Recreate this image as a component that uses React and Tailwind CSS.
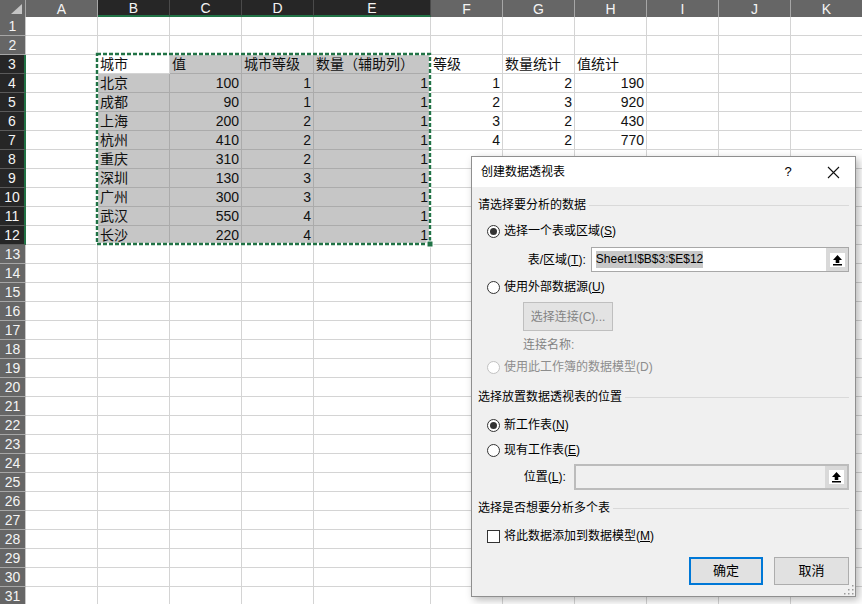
import React from "react";

const COLS = ["A", "B", "C", "D", "E", "F", "G", "H", "I", "J", "K"];

// data by row number, columns B..H
const DATA = {
  3: ["城市", "值", "城市等级", "数量（辅助列）", "等级", "数量统计", "值统计"],
  4: ["北京", 100, 1, 1, 1, 2, 190],
  5: ["成都", 90, 1, 1, 2, 3, 920],
  6: ["上海", 200, 2, 1, 3, 2, 430],
  7: ["杭州", 410, 2, 1, 4, 2, 770],
  8: ["重庆", 310, 2, 1],
  9: ["深圳", 130, 3, 1],
  10: ["广州", 300, 3, 1],
  11: ["武汉", 550, 4, 1],
  12: ["长沙", 220, 4, 1],
};

const isSelRow = (r) => r >= 3 && r <= 12;
const isSelCol = (c) => c >= 1 && c <= 4;

function ColHeader({ label, idx }) {
  const sel = isSelCol(idx);
  return (
    <div
      className={
        sel
          ? "h-[17px] bg-[#262626] border-r border-r-[#4a4a4a] border-b-2 border-b-[#217346] flex items-center justify-center text-[14px] leading-none text-[#f4f4f4]"
          : "h-[17px] bg-[#666666] border-r border-r-[#a6a6a6] flex items-center justify-center text-[14px] leading-none text-[#f4f4f4]"
      }
    >
      {label}
    </div>
  );
}

function RowHeader({ r }) {
  return (
    <div
      className={
        isSelRow(r)
          ? "h-[19px] bg-[#262626] border-b border-b-[#5a5a5a] border-r-2 border-r-[#217346] flex items-center justify-center text-[14px] leading-none text-[#f4f4f4]"
          : "h-[19px] bg-[#666666] border-b border-b-[#a6a6a6] border-r border-r-[#c8c8c8] flex items-center justify-center text-[14px] leading-none text-[#f4f4f4]"
      }
    >
      {r}
    </div>
  );
}

function Cell({ r, c }) {
  const row = DATA[r];
  const v = row && c >= 1 ? row[c - 1] : undefined;
  const sel = isSelRow(r) && isSelCol(c) && !(r === 3 && c === 1);
  const num = typeof v === "number";
  let cls = "h-[19px] border-r border-b border-[#d4d4d4] bg-white";
  if (sel) cls = "h-[19px] border-r border-b border-[#ababab] bg-[#c6c6c6]";
  return (
    <div className={cls}>
      {v !== undefined && (
        <div
          className={
            num
              ? "h-full flex items-end justify-end pr-[2px] text-[14px] leading-[17px] text-[#111] whitespace-nowrap"
              : "h-full flex items-end pl-[2px] text-[14px] leading-[17px] text-[#111] whitespace-nowrap"
          }
        >
          {v}
        </div>
      )}
    </div>
  );
}

function Radio({ checked, disabled }) {
  return (
    <span
      className={
        disabled
          ? "w-[13px] h-[13px] rounded-full border border-[#c2c2c2] bg-white flex items-center justify-center shrink-0"
          : "w-[13px] h-[13px] rounded-full border border-[#333] bg-white flex items-center justify-center shrink-0"
      }
    >
      {checked && <span className="w-[7px] h-[7px] rounded-full bg-[#333]" />}
    </span>
  );
}

function SectionTitle({ children, mt }) {
  return (
    <div className={`h-[20px] flex items-center gap-[3px] ${mt}`}>
      <span className="whitespace-nowrap">{children}</span>
      <span className="flex-1 h-px bg-[#d9d9d9]" />
    </div>
  );
}

function UploadBtn() {
  return (
    <div className="w-[22px] h-full bg-[#d9d9d9] flex items-center justify-center">
      <div className="w-[15px] h-[14px] bg-white flex items-center justify-center">
        <svg width="11" height="12" viewBox="0 0 11 12">
          <path d="M5.5 1 L10 6 H7.3 V9 H3.7 V6 H1 Z" fill="#000" />
          <rect x="1" y="10" width="9" height="1.5" fill="#000" />
        </svg>
      </div>
    </div>
  );
}

function Dialog() {
  return (
    <div className="absolute left-[471px] top-[156px] w-[385px] h-[441px] border border-[#8f8f8f] bg-[#f0f0f0] shadow-[3px_3px_8px_rgba(0,0,0,0.28)] flex flex-col text-[12px] text-black">
      <div className="h-[30px] bg-white flex items-center shrink-0">
        <span className="pl-[9px] flex-1">创建数据透视表</span>
        <span className="w-[46px] text-center text-[13px]">?</span>
        <span className="w-[44px] flex items-center justify-center">
          <svg width="13" height="13" viewBox="0 0 13 13">
            <path d="M1 1 L12 12 M12 1 L1 12" stroke="#111" strokeWidth="1.1" />
          </svg>
        </span>
      </div>
      <div className="flex flex-col px-[6px]">
        <SectionTitle mt="mt-[8px]">请选择要分析的数据</SectionTitle>
        <div className="h-[20px] mt-[6px] pl-[9px] flex items-center gap-[4px]">
          <Radio checked />
          <span>
            选择一个表或区域(<span className="underline">S</span>)
          </span>
        </div>
        <div className="h-[25px] mt-[6px] flex items-center">
          <span className="ml-[45px] w-[68px] pr-[5px] text-right whitespace-nowrap">
            表/区域(<span className="underline">T</span>):
          </span>
          <div className="w-[259px] h-full border border-[#a8a8a8] bg-white flex">
            <div className="flex-1 flex items-center pl-[4px]">
              <span className="bg-[#c8c8c8] text-[12px] leading-[17px]">Sheet1!$B$3:$E$12</span>
            </div>
            <UploadBtn />
          </div>
        </div>
        <div className="h-[20px] mt-[5px] pl-[9px] flex items-center gap-[4px]">
          <Radio />
          <span>
            使用外部数据源(<span className="underline">U</span>)
          </span>
        </div>
        <div className="h-[29px] mt-[5px] ml-[45px] w-[90px] border border-[#bfbfbf] bg-[#e3e3e3] text-[#838383] flex items-center justify-center">
          选择连接(C)...
        </div>
        <div className="h-[20px] mt-[4px] ml-[45px] flex items-center text-[#838383]">连接名称:</div>
        <div className="h-[20px] mt-[2px] pl-[9px] flex items-center gap-[4px] text-[#8d8d8d]">
          <Radio disabled />
          <span>使用此工作簿的数据模型(D)</span>
        </div>
        <SectionTitle mt="mt-[10px]">选择放置数据透视表的位置</SectionTitle>
        <div className="h-[20px] mt-[8px] pl-[9px] flex items-center gap-[4px]">
          <Radio checked />
          <span>
            新工作表(<span className="underline">N</span>)
          </span>
        </div>
        <div className="h-[20px] mt-[5px] pl-[9px] flex items-center gap-[4px]">
          <Radio />
          <span>
            现有工作表(<span className="underline">E</span>)
          </span>
        </div>
        <div className="h-[26px] mt-[4px] flex items-center">
          <span className="ml-[45px] w-[51px] pr-[8px] text-right whitespace-nowrap">
            位置(<span className="underline">L</span>):
          </span>
          <div className="w-[276px] h-full border-2 border-[#bcbcbc] bg-[#f0f0f0] flex">
            <div className="flex-1" />
            <UploadBtn />
          </div>
        </div>
        <SectionTitle mt="mt-[8px]">选择是否想要分析多个表</SectionTitle>
        <div className="h-[20px] mt-[8px] pl-[9px] flex items-center gap-[4px]">
          <span className="w-[13px] h-[13px] border border-[#333] bg-white shrink-0" />
          <span>
            将此数据添加到数据模型(<span className="underline">M</span>)
          </span>
        </div>
        <div className="h-[28px] mt-[11px] flex justify-end gap-[11px] text-[13px]">
          <div className="w-[74px] h-full border-2 border-[#0078d7] bg-[#e1e1e1] flex items-center justify-center">确定</div>
          <div className="w-[75px] h-full border border-[#adadad] bg-[#e1e1e1] flex items-center justify-center">取消</div>
        </div>
      </div>
      <svg className="absolute right-[1px] bottom-[1px]" width="11" height="11" viewBox="0 0 11 11">
        {[
          [9, 1], [9, 5], [5, 5], [9, 9], [5, 9], [1, 9],
        ].map(([x, y]) => (
          <rect key={`${x}-${y}`} x={x} y={y} width="1.5" height="1.5" fill="#9a9a9a" />
        ))}
      </svg>
    </div>
  );
}

export default function App() {
  const rows = Array.from({ length: 31 }, (_, i) => i + 1);
  return (
    <div className="relative w-[862px] h-[604px] overflow-hidden bg-white font-['Liberation_Sans','Noto_Sans_CJK_SC',sans-serif]">
      <div className="grid grid-cols-[26px_72px_72px_72px_72px_117px_72px_72px_72px_72px_72px_72px]">
        <div className="h-[17px] bg-[#666666] border-r border-r-[#a6a6a6] relative">
          <svg className="absolute left-[11px] top-[4px]" width="11" height="10" viewBox="0 0 11 10">
            <path d="M11 0 V10 H0 Z" fill="#c4c4c4" />
          </svg>
        </div>
        {COLS.map((c, i) => (
          <ColHeader key={c} label={c} idx={i} />
        ))}
        {rows.map((r) => (
          <React.Fragment key={r}>
            <RowHeader r={r} />
            {COLS.map((c, i) => (
              <Cell key={c} r={r} c={i} />
            ))}
          </React.Fragment>
        ))}
      </div>

      {/* marching ants round B3:E12 */}
      <svg className="absolute left-[94px] top-[51px]" width="342" height="198" viewBox="0 0 342 198">
        <rect x="3" y="3" width="333" height="190" fill="none" stroke="#fff" strokeWidth="2.4" />
        <rect x="3" y="3" width="333" height="190" fill="none" stroke="#217346" strokeWidth="2.4" strokeDasharray="4 2" />
        <rect x="333" y="190" width="6" height="6" fill="#217346" stroke="#fff" strokeWidth="1" />
      </svg>

      <Dialog />
    </div>
  );
}
